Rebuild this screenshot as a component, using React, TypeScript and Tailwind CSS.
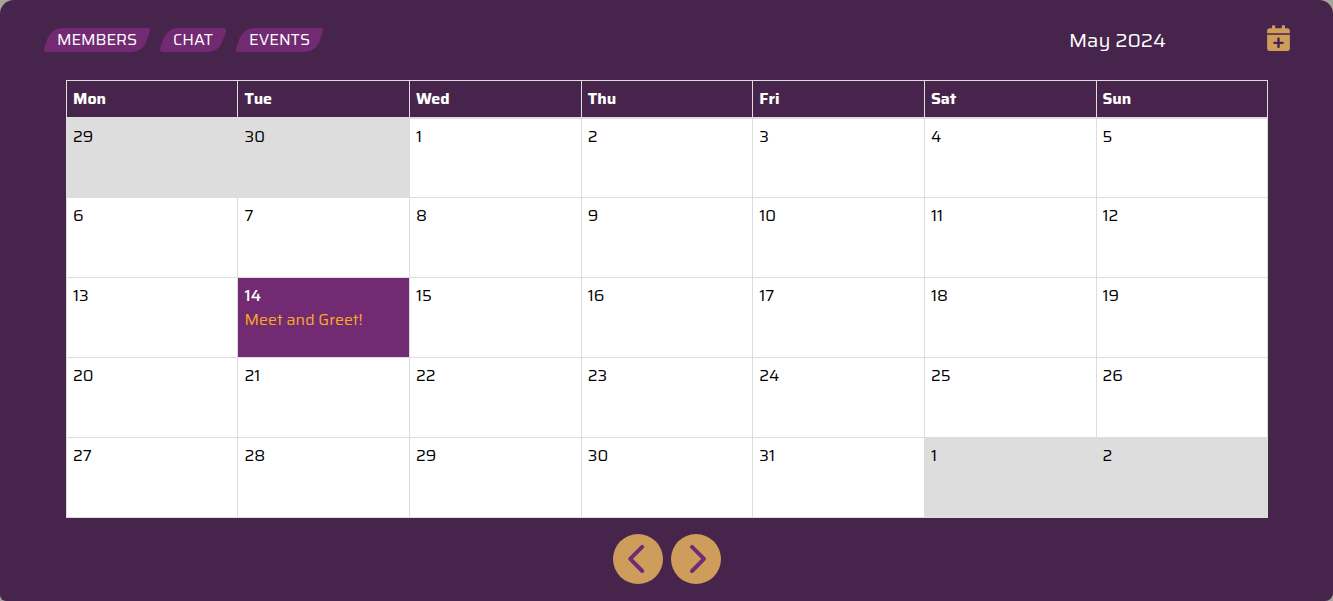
import React from "react";
import { FaCalendarPlus } from "react-icons/fa6";

type Day = { n: number; outside?: boolean; event?: string };

const names = ["Mon", "Tue", "Wed", "Thu", "Fri", "Sat", "Sun"];

const insets = ["pl-1.5", "pl-[6.6px]", "pl-1.5", "pl-[5.8px]", "pl-[6.3px]", "pl-1.5", "pl-[5.5px]"];

const days: Day[] = [
  { n: 29, outside: true },
  { n: 30, outside: true },
  ...Array.from({ length: 31 }, (_, i) => ({
    n: i + 1,
    event: i === 13 ? "Meet and Greet!" : undefined,
  })),
  { n: 1, outside: true },
  { n: 2, outside: true },
];

const columns = "grid grid-cols-[170px_171px_171px_170px_171px_171px_170px] gap-px";

function Tab({ label, size }: { label: string; size: string }) {
  return (
    <button className={`relative flex h-6 items-center justify-center text-white ${size}`}>
      <span className="absolute inset-0 -skew-x-[20deg] rounded-[10px_4px_10px_4px] bg-[#722a72]" />
      <span className="relative whitespace-nowrap">{label}</span>
    </button>
  );
}

function Arrow({ d, label }: { d: string; label: string }) {
  return (
    <button aria-label={label} className="size-[50px] rounded-full bg-[#cf9d5b]">
      <svg viewBox="0 0 50 50" className="size-[50px]" fill="none" stroke="#722a72" strokeWidth="4" strokeLinecap="round" strokeLinejoin="round">
        <path d={d} />
      </svg>
    </button>
  );
}

export default function App() {
  return (
    <div className="h-[601px] w-[1333px] bg-[#a5a699] font-['Saira','Inter',sans-serif]">
      <div className="flex h-full flex-col rounded-[14px_14px_8px_6px] bg-[#47244b]">
        <header className="flex h-20 shrink-0 items-start pl-[47px] pr-[43px]">
          <nav className="flex gap-4 pt-7 text-base leading-6">
            <Tab label="MEMBERS" size="w-[100px]" />
            <Tab label="CHAT" size="w-[60px]" />
            <Tab label="EVENTS" size="w-[81px]" />
          </nav>
          <h1 className="ml-auto w-[198px] pt-[25px] text-xl leading-[30px] text-white">May 2024</h1>
          <button aria-label="Add event" className="mt-[25px] text-[#cf9d5b]">
            <FaCalendarPlus className="h-[26px] w-[23px]" />
          </button>
        </header>
        <main className="ml-[66px] w-[1202px] bg-[#ddd] p-px text-base leading-6">
          <div className={`${columns} mb-0.5 h-9`}>
            {names.map((name, i) => (
              <div key={name} className={`bg-[#47244b] pt-1.5 font-bold text-white ${insets[i]}`}>
                {name}
              </div>
            ))}
          </div>
          <div className={`${columns} grid-rows-[78px_79px_79px_79px_79px]`}>
            {days.map((day, i) => (
              <div
                key={i}
                className={`pt-1.5 ${insets[i % 7]} ${day.outside ? "bg-[#ddd] text-black" : day.event ? "bg-[#722a72] text-white" : "bg-white text-black"}`}
              >
                <div className={day.event ? "font-medium" : ""}>{day.n}</div>
                {day.event && <div className="text-[#f9a825]">{day.event}</div>}
              </div>
            ))}
          </div>
        </main>
        <footer className="flex justify-center gap-2 pt-4">
          <Arrow label="Previous month" d="M29.2 12.8 17.2 24.9 29.2 37" />
          <Arrow label="Next month" d="M21 12.8 33 24.9 21 37" />
        </footer>
      </div>
    </div>
  );
}
